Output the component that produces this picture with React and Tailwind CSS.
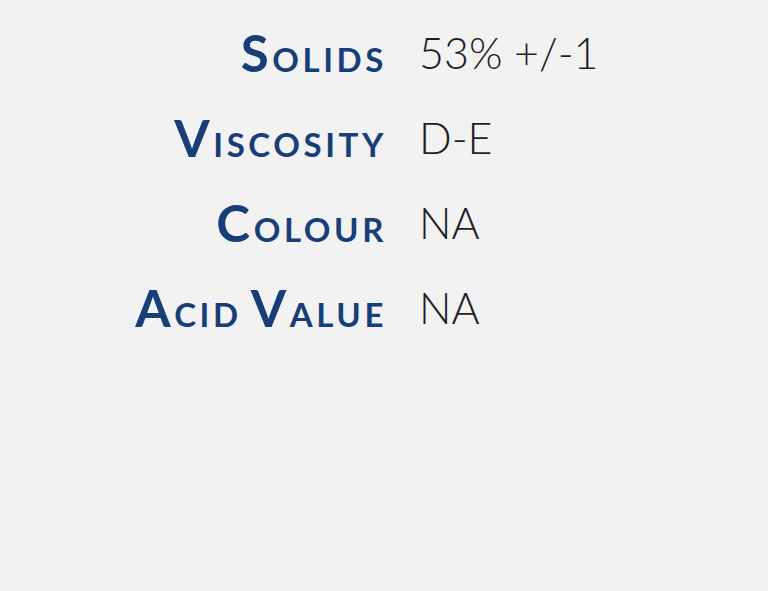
const specs = [
  { label: ["Solids"], value: "53% +/-1" },
  { label: ["Viscosity"], value: "D-E" },
  { label: ["Colour"], value: "NA" },
  { label: ["Acid", "Value"], value: "NA" },
];

const SmallCapsWord = ({ word }) => (
  <span className="tracking-[3.6px]">
    <span className="text-[51px]">{word[0]}</span>
    <span className="text-[33px] uppercase">{word.slice(1)}</span>
  </span>
);

const App = () => {
  return (
    <div className="w-[768px] h-[591px] bg-[#f2f2f2] overflow-hidden" style={{ fontFamily: "Lato, 'Open Sans', sans-serif" }}>
      <div className="grid grid-cols-[387px_1fr] gap-x-[32px] pt-[18px]">
        {specs.map((spec) => (
          <div key={spec.value + spec.label.join()} className="contents">
            <div className="h-[85px] flex items-baseline justify-end font-bold text-[#173e78] leading-[70px] gap-[9px]">
              {spec.label.map((w) => (
                <SmallCapsWord key={w} word={w} />
              ))}
            </div>
            <div className="h-[85px] text-[43px] font-light leading-[70px] text-[#1f1d26]">{spec.value}</div>
          </div>
        ))}
      </div>
    </div>
  );
};

export default App;
